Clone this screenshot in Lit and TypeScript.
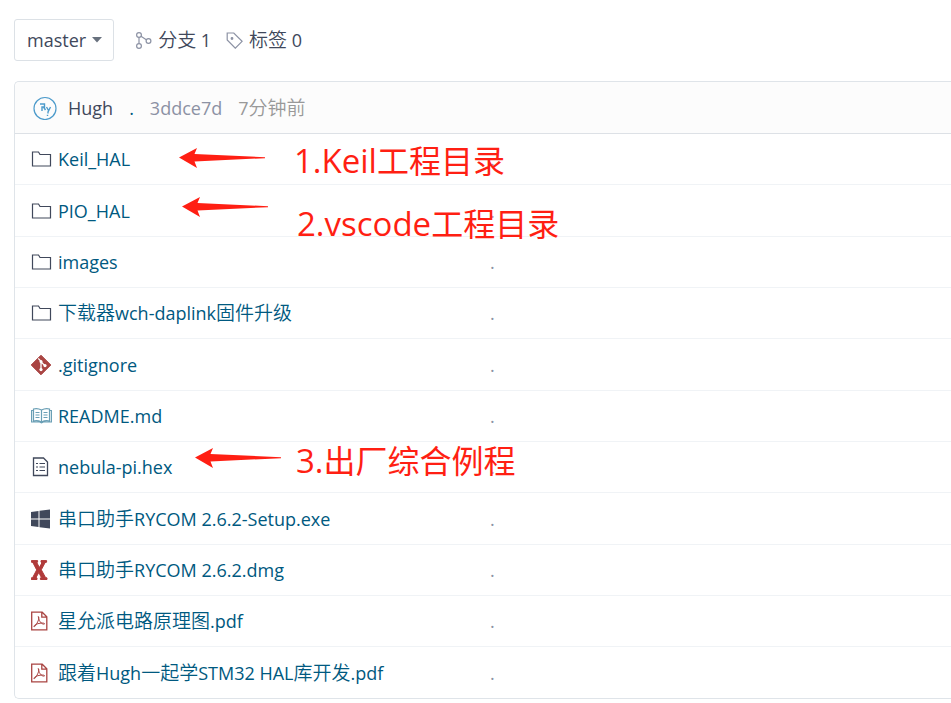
import { LitElement, html, css, svg } from "lit";
import { customElement } from "lit/decorators.js";

type Kind = "folder" | "git" | "book" | "text" | "windows" | "dmg" | "pdf";

const entries: { name: string; kind: Kind }[] = [
  { name: "Keil_HAL", kind: "folder" },
  { name: "PIO_HAL", kind: "folder" },
  { name: "images", kind: "folder" },
  { name: "下载器wch-daplink固件升级", kind: "folder" },
  { name: ".gitignore", kind: "git" },
  { name: "README.md", kind: "book" },
  { name: "nebula-pi.hex", kind: "text" },
  { name: "串口助手RYCOM 2.6.2-Setup.exe", kind: "windows" },
  { name: "串口助手RYCOM 2.6.2.dmg", kind: "dmg" },
  { name: "星允派电路原理图.pdf", kind: "pdf" },
  { name: "跟着Hugh一起学STM32 HAL库开发.pdf", kind: "pdf" },
];

const glyphs = {
  folder: svg`<path d="M1.5 17V3h6L9 5.5h10.5V17z" fill="none" stroke="#40485b" stroke-width="1.2"/>`,
  git: svg`<path d="M10 .2 19.8 10 10 19.8.2 10z" fill="#a94442" stroke="#a94442" stroke-linejoin="round"/>
    <path d="M7.2 3.4 10 6.2v8.6M10 6.8l3.8 3.8" fill="none" stroke="#fff" stroke-width="1.3"/>
    <circle cx="10" cy="6.4" r="1.5" fill="#fff"/><circle cx="10" cy="14.6" r="1.6" fill="#fff"/><circle cx="14" cy="10.6" r="1.6" fill="#fff"/>`,
  book: svg`<path d="M10.5 4Q6.5 1.8 2.5 3v12q4-1 8 1 4-2 8-1V3q-4-1.2-8 1zM10.5 4v13M2.5 4.5H.6V16h8l1.9.8 1.9-.8h8V4.5h-1.9" fill="none" stroke="#6a9fb5" stroke-width="1.2"/>
    <path d="M4.5 6.5h4M4.5 9h4M4.5 11.5h4M12.5 6.5h4M12.5 9h4M12.5 11.5h4" stroke="#6a9fb5" stroke-width="1.1"/>`,
  text: svg`<path d="M2.5 1h10l4 4v13.5h-14z" fill="none" stroke="#40485b" stroke-width="1.3"/>
    <path d="M5 6.500h2M5 10h2M5 13.500h2M8.500 6.500h5.500M8.500 10h5.500M8.500 13.500h5.500" stroke="#40485b" stroke-width="1.2"/>`,
  windows: svg`<path d="M0 3l7.500-1v7.500H0zM8.500 1.800 19 .4v9.100H8.500zM0 10.500h7.500V18L0 17zM8.500 10.500H19v9.100L8.500 18.200z" fill="#40485b"/>`,
  dmg: svg`<path d="M.4.6h6.200v1.600l-.8.4 2.600 5L11 2.600l-1-.4V.6h5.600v1.600l-1.500.4L10.300 9.800l4.200 7.700 1.500.4v1.600H9.400v-1.600l1-.4-2.600-5-2.800 5 1 .4v1.600H.2v-1.600l1.500-.4 4-7.600L1.900 2.600.4 2.200z" fill="#b03a3a" stroke="#b03a3a"/>`,
  pdf: svg`<path d="M.7 1.200h10.500l4.600 4.600v13H.7zM10.800 1.200v5h5" fill="none" stroke="#a94442" stroke-width="1.300"/>
    <path d="M7.300 5.500c1.200 1 .2 4-1.200 6.500S3.700 16 3 15.700s.8-2.200 3.800-3 6.300-.9 6.700-.1-1.600.9-3.200-.6S7.600 8.600 7.300 5.500z" fill="none" stroke="#a94442"/>`,
};

/** Sets runs of Chinese characters apart from Latin ones, as they take a larger size. */
const mixed = (text: string) =>
  text
    .split(/([\u4e00-\u9fff]+)/)
    .filter(Boolean)
    .map((run) => (/[\u4e00-\u9fff]/.test(run) ? html`<span class="han">${run}</span>` : run));

const arrow = html`<svg class="arrow" viewBox="0 0 86 20" aria-hidden="true">
  <path d="M0 9.500 18 0l-2.500 6L86 9.200v1L15.500 13.500 18 20z" fill="#ff1f13" />
</svg>`;

@customElement("app-root")
export class AppRoot extends LitElement {
  static styles = css`
    :host {
      display: block;
      position: relative;
      box-sizing: border-box;
      padding: 19px 0 4px 14px;
      overflow: hidden;
      background: #fff;
      color: #40485b;
      font: 18px/26px "Open Sans", "Noto Sans CJK SC", sans-serif;
    }
    a { color: inherit; text-decoration: none; }
    svg { display: block; flex: none; }
    .han { font-family: "Noto Sans CJK SC", sans-serif; font-size: 19px; font-weight: 350; line-height: 1; }
    .toolbar { display: flex; align-items: center; }
    .branch {
      display: flex;
      align-items: center;
      gap: 6px;
      box-sizing: border-box;
      height: 42px;
      padding: 0 11px 0 12px;
      margin-right: 21px;
      border: 1px solid #dce1e6;
      border-radius: 3px;
      background: #fff;
      color: inherit;
      font: inherit;
    }
    .caret { width: 10px; height: 6px; }
    .stat { display: flex; align-items: center; gap: 6px; margin-right: 15px; }
    .stat svg { width: 17px; height: 17px; }
    .panel {
      margin-top: 20px;
      border: 1px solid #dfe4e9;
      border-right: 0;
      border-radius: 5px 0 0 5px;
    }
    .commit {
      display: flex;
      align-items: center;
      height: 51px;
      padding-left: 18px;
      border-bottom: 1px solid #dde1e6;
      border-radius: 5px 0 0 0;
      background: #fcfcfc;
    }
    .avatar { width: 24px; height: 24px; margin-right: 11px; }
    .dot { margin: 0 16px; color: #005980; }
    .hash { margin-right: 16px; color: #8c92a4; }
    .time { color: #999; }
    table { width: 100%; border-collapse: separate; border-spacing: 0; table-layout: fixed; }
    td, th {
      box-sizing: border-box;
      height: 51px;
      padding: 0;
      border-bottom: 1px solid #f0f3f6;
      font-weight: 400;
      text-align: left;
    }
    tr:nth-child(3n + 2) > * { height: 52px; }
    tr:last-child > * { height: 51px; border-bottom: 0; }
    .name { display: flex; align-items: center; padding-left: 16px; color: #005980; }
    .icon { width: 21px; height: 20px; margin-right: 6px; }
    .message { padding-left: 7px; color: #8c92a4; }
    .note {
      position: absolute;
      color: #ff1f13;
      font: 33px/44px "Open Sans", "Noto Sans CJK SC", sans-serif;
      white-space: nowrap;
    }
    .note .han { font-size: 32px; font-weight: 400; }
    .arrow { position: absolute; width: 86px; height: 20px; }
    .note-keil { left: 294px; top: 139px; }
    .note-vscode { left: 297px; top: 202px; }
    .note-demo { left: 296px; top: 439px; }
    .note-keil .arrow { left: -115px; top: 9px; }
    .note-vscode .arrow { left: -115px; top: -5px; }
    .note-demo .arrow { left: -101px; top: 9px; }
  `;

  render() {
    return html`
      <div class="toolbar">
        <button class="branch" type="button">
          master
          <svg class="caret" viewBox="0 0 10 6" aria-hidden="true"><path d="M0 0h10L5 5.500z" fill="#68717e" /></svg>
        </button>
        <a class="stat" href="#branches">
          <svg viewBox="0 0 17 17" fill="none" stroke="#8c92a4" stroke-width="1.200" aria-hidden="true">
            <circle cx="4" cy="3" r="2.400" /><circle cx="4" cy="14" r="2.400" /><circle cx="13.500" cy="9" r="2.400" />
            <path d="M4 5.400v6.200M6 4.300l5.300 3.400" />
          </svg>
          <span>${mixed("分支 1")}</span>
        </a>
        <a class="stat" href="#tags">
          <svg viewBox="0 0 17 17" fill="none" stroke="#8c92a4" stroke-width="1.200" aria-hidden="true">
            <path d="M1.200 1h6.600l8.300 8.300-6.800 6.900L1.200 8z" /><circle cx="6" cy="6.500" r=".8" fill="#8c92a4" />
          </svg>
          <span>${mixed("标签 0")}</span>
        </a>
      </div>
      <div class="panel">
        <div class="commit">
          <svg class="avatar" viewBox="0 0 24 24" fill="none" stroke="#4d9bcb" aria-hidden="true">
            <circle cx="12" cy="12.500" r="11" stroke-width="1.200" />
            <path d="M7 8h4.500v3H9v4M10.500 11l2 3M13.500 11l2 3.500M17.500 11l-2.500 5v1.500M14.500 18.800v1.200" stroke-width="1.400" />
          </svg>
          <a href="#hugh">Hugh</a><span class="dot">.</span>
          <a class="hash" href="#3ddce7d">3ddce7d</a><span class="time">${mixed("7分钟前")}</span>
        </div>
        <table>
          <tbody>
            ${entries.map(
              (e) => html`<tr>
                <th scope="row">
                  <a class="name" href="#file">
                    <svg class="icon" viewBox="0 0 21 20" aria-hidden="true">${glyphs[e.kind]}</svg>
                    <span>${mixed(e.name)}</span>
                  </a>
                </th>
                <td class="message">.</td>
              </tr>`,
            )}
          </tbody>
        </table>
      </div>
      <div class="note note-keil">${arrow}${mixed("1.Keil工程目录")}</div>
      <div class="note note-vscode">${arrow}${mixed("2.vscode工程目录")}</div>
      <div class="note note-demo">${arrow}${mixed("3.出厂综合例程")}</div>
    `;
  }
}
